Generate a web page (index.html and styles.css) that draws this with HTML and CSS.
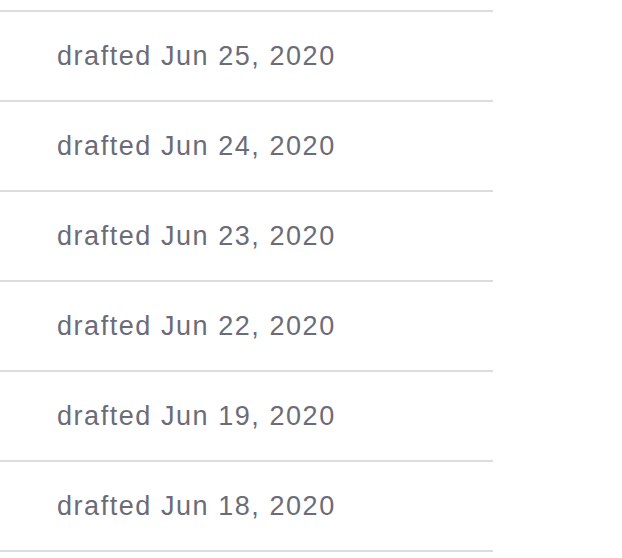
FILE: index.html
```html
<!DOCTYPE html>
<html>
<head>
<meta charset="utf-8">
<link rel="stylesheet" href="styles.css">
</head>
<body>
<ul class="drafts">
  <li class="draft">drafted Jun 25, 2020</li>
  <li class="draft">drafted Jun 24, 2020</li>
  <li class="draft">drafted Jun 23, 2020</li>
  <li class="draft">drafted Jun 22, 2020</li>
  <li class="draft">drafted Jun 19, 2020</li>
  <li class="draft">drafted Jun 18, 2020</li>
</ul>
</body>
</html>
```
FILE: styles.css
```css
html, body {
  margin: 0;
  padding: 0;
  background: #ffffff;
}
.drafts {
  list-style: none;
  margin: 10px 0 0 0;
  padding: 0;
  width: 493px;
  border-top: 2px solid #dcdcdc;
}
.draft {
  height: 88px;
  border-bottom: 2px solid #dcdcdc;
  display: flex;
  align-items: center;
  padding-left: 57px;
  font-family: "Liberation Sans", Arial, sans-serif;
  font-size: 27px;
  letter-spacing: 1.55px;
  color: #6c6b78;
}
```
